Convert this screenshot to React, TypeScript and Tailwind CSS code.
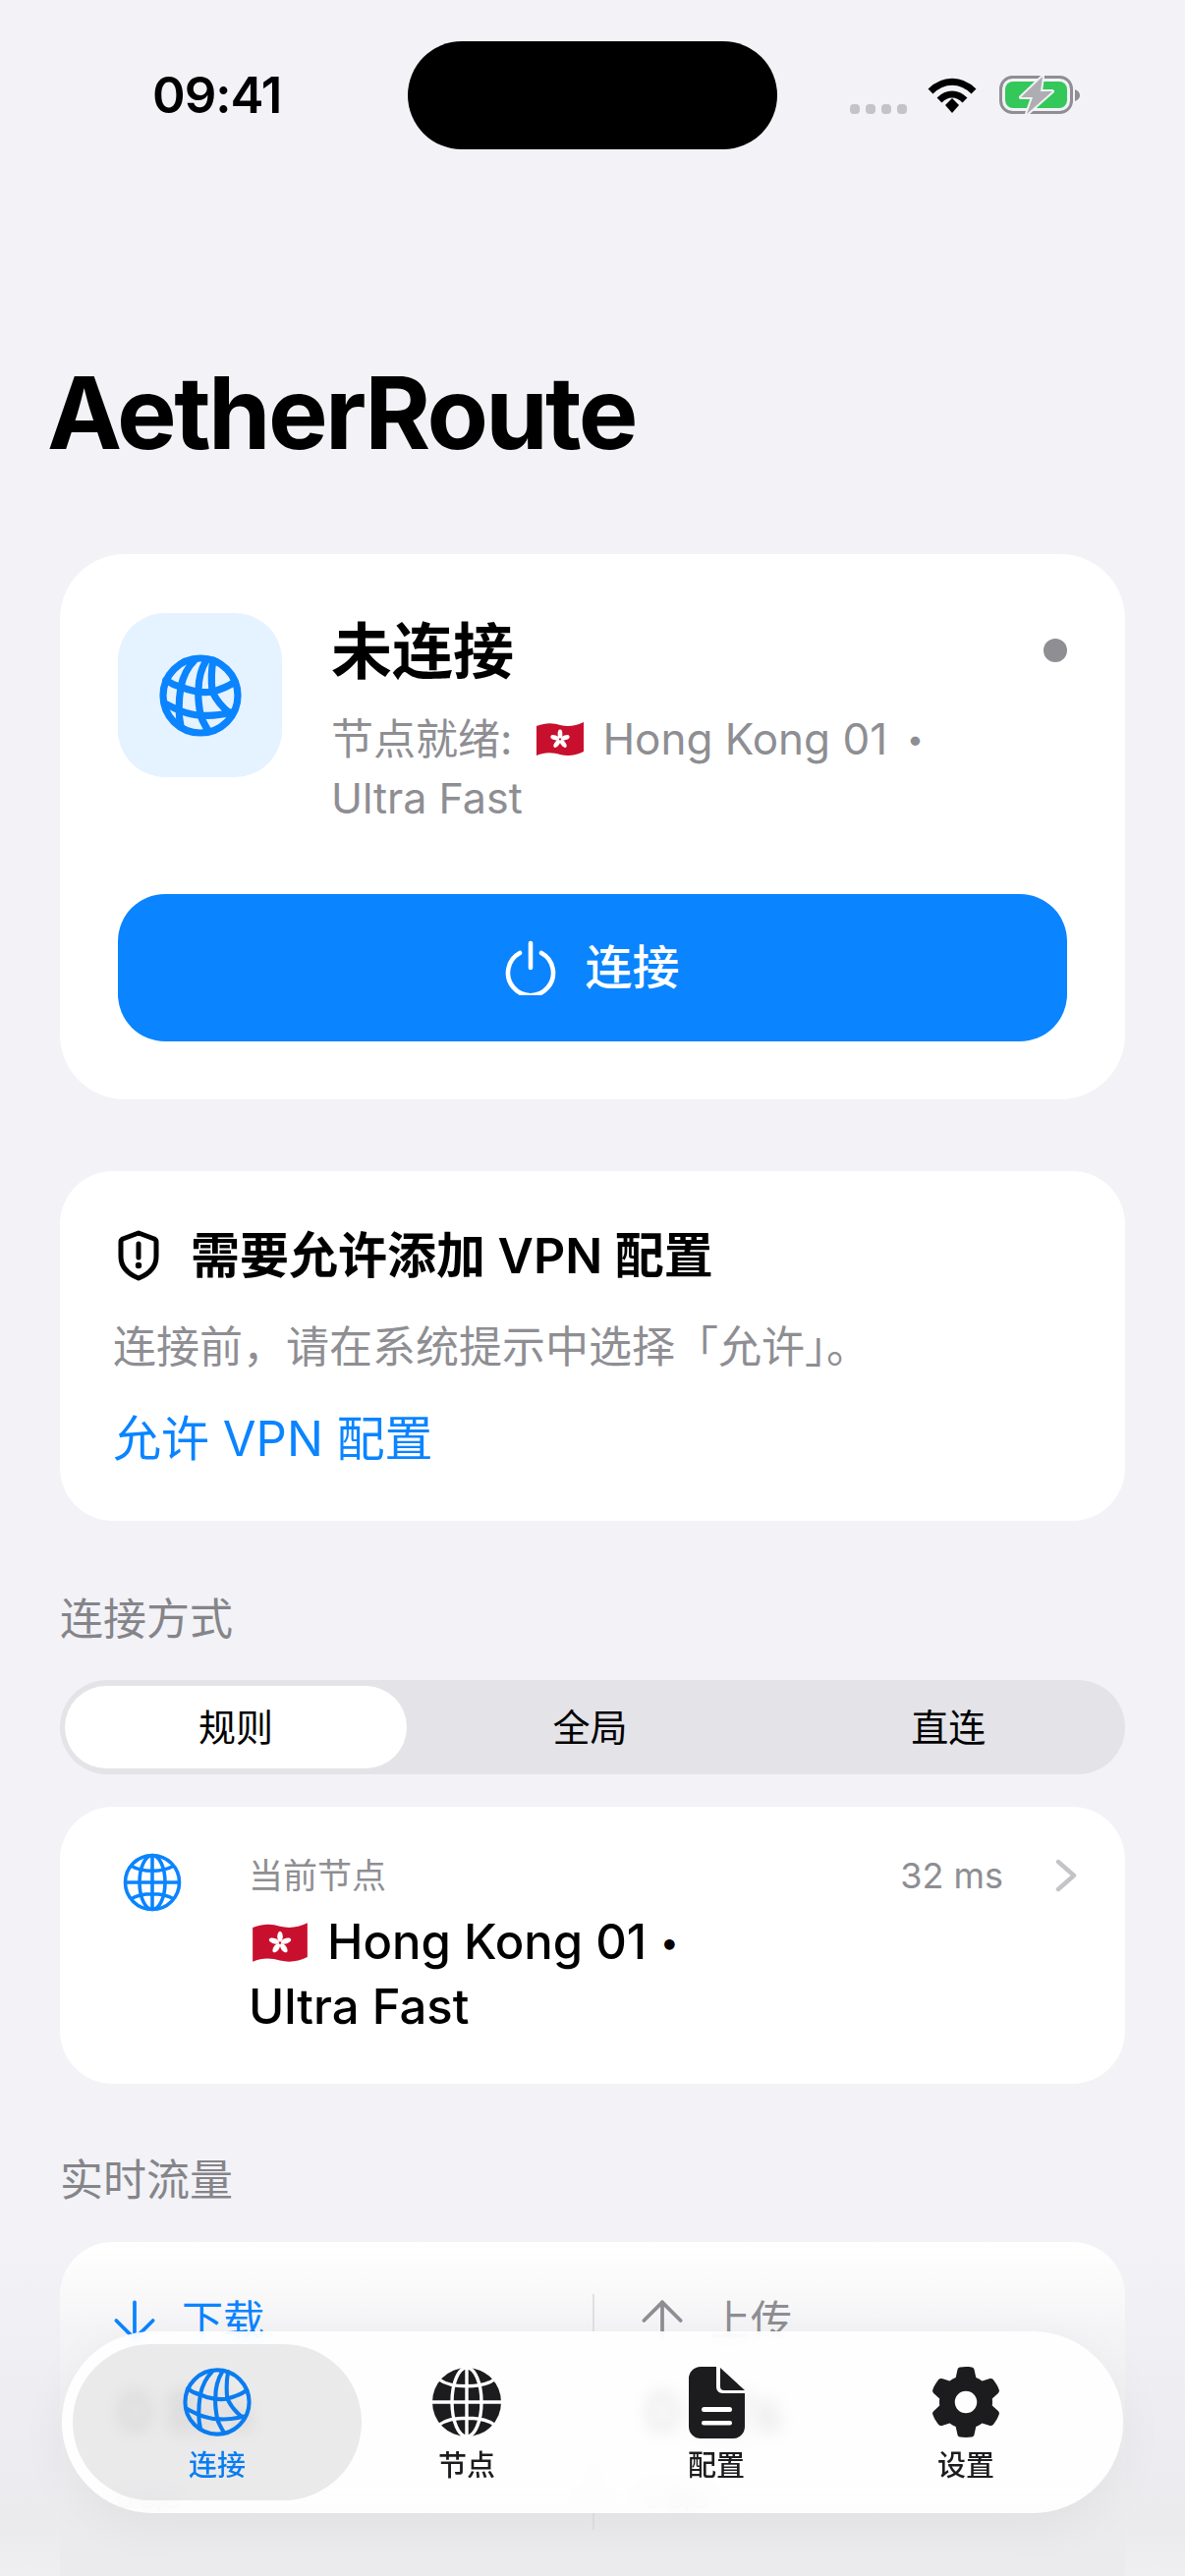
import { ArrowDown, ArrowUp } from 'lucide-react'
import { FaGear } from 'react-icons/fa6'

// Hong Kong flag, drawn because no emoji font is installed
function HkFlag({ className }: { className: string }) {
    return (
        <svg viewBox="0 0 50 36" className={className}>
            <path d="M1 5 C12 1 18 2 25 4 C33 6 41 5 49 1 V31 C41 35 33 36 25 34 C18 32 10 31 1 35 Z" fill="#c8102e" />
            <g transform="translate(25 18.5)" fill="#ffffff">
                <ellipse cx="0" cy="-5.5" rx="2.4" ry="4.6" />
                <ellipse cx="0" cy="-5.5" rx="2.4" ry="4.6" transform="rotate(72)" />
                <ellipse cx="0" cy="-5.5" rx="2.4" ry="4.6" transform="rotate(144)" />
                <ellipse cx="0" cy="-5.5" rx="2.4" ry="4.6" transform="rotate(216)" />
                <ellipse cx="0" cy="-5.5" rx="2.4" ry="4.6" transform="rotate(288)" />
            </g>
        </svg>
    )
}

// Irregular mesh globe (connect tab and status tile)
function NetworkIcon({ className, width }: { className: string; width: number }) {
    return (
        <svg viewBox="0 0 84 84" fill="none" stroke="currentColor" strokeWidth={width} strokeLinecap="round" className={className}>
            <circle cx="42" cy="42" r="38" />
            <path d="M36 6 C28 14 24 24 22 33 C20 46 19 60 22 73" />
            <path d="M7 26 C12 30 17 32 22 33 C30 37 44 40 54 38 C62 36 70 33 77 28" />
            <path d="M48 6 C42 16 40 26 40 36 C39 46 41 54 42 62 C44 68 47 73 50 78" />
            <path d="M55 6 C53 16 53 28 54 38 C58 46 64 54 72 60" />
            <path d="M6 50 C11 53 16 55 20 57 C28 60 36 62 42 62 C52 63 62 62 74 59" />
        </svg>
    )
}

// Outline globe for the current node row
function GlobeOutline({ className }: { className: string }) {
    return (
        <svg viewBox="0 0 60 60" fill="none" stroke="currentColor" strokeWidth="3.6" className={className}>
            <circle cx="30" cy="30" r="27.5" />
            <ellipse cx="30" cy="30" rx="13" ry="27.5" />
            <path d="M30 2.5 V57.5 M2.5 30 H57.5 M8 13 C20 20 40 20 52 13 M8 47 C20 40 40 40 52 47" />
        </svg>
    )
}

function GlobeFilled({ className }: { className: string }) {
    return (
        <svg viewBox="0 0 72 72" className={className}>
            <circle cx="36" cy="36" r="35" fill="#1c1c1e" />
            <g fill="none" stroke="#ffffff" strokeWidth="3.4">
                <ellipse cx="36" cy="36" rx="15" ry="35" />
                <path d="M36 0 V72 M0 36 H72 M8 13 C20 22 52 22 64 13 M8 59 C20 50 52 50 64 59" />
            </g>
        </svg>
    )
}

function DocIcon({ className }: { className: string }) {
    return (
        <svg viewBox="0 0 57 73" className={className}>
            <path d="M12 0 H28 V21 A6 6 0 0 0 34 27 H57 V61 A12 12 0 0 1 45 73 H12 A12 12 0 0 1 0 61 V12 A12 12 0 0 1 12 0 Z" fill="#1c1c1e" />
            <path d="M32 1 L57 24 H36 A4 4 0 0 1 32 20 Z" fill="#1c1c1e" />
            <rect x="13" y="41" width="31" height="5" rx="2.5" fill="#ffffff" />
            <rect x="13" y="55" width="31" height="4.5" rx="2.2" fill="#ffffff" />
        </svg>
    )
}

function ShieldIcon() {
    return (
        <svg viewBox="0 0 42 52" className="h-[52px] w-[42px] shrink-0" fill="none">
            <path d="M21 3 L37 9 Q39 10 39 12 V27 C39 38 31 45 21 49 C11 45 3 38 3 27 V12 Q3 10 5 9 Z" stroke="#000000" strokeWidth="5" strokeLinejoin="round" />
            <path d="M21 14 V28" stroke="#000000" strokeWidth="5" strokeLinecap="round" />
            <circle cx="21" cy="36" r="3.2" fill="#000000" />
        </svg>
    )
}

function StatusIcons() {
    return (
        <div className="flex items-center">
            <div className="flex gap-[6px] mt-[28px]">
                {[...Array(4)].map((_, i) => (
                    <div key={i} className="w-[10px] h-[10px] rounded-[4px] bg-[#c4c4c8]" />
                ))}
            </div>
            <svg viewBox="0 0 50 38" className="w-[50px] h-[38px] ml-[21px] mt-[2px]" fill="none" stroke="#000000" strokeWidth="7">
                <path d="M3 14 C16 1 34 1 47 14" />
                <path d="M12 23 C20 15 30 15 38 23" />
                <path d="M18 28 L25 21 L32 28 L25 36 Z" fill="#000000" stroke="none" />
            </svg>
            <svg viewBox="0 0 82 40" className="w-[82px] h-[40px] ml-[23px]">
                <rect x="1.5" y="1.5" width="72" height="36" rx="12" fill="none" stroke="#8e8e93" strokeWidth="3" />
                <rect x="6" y="6" width="63" height="27" rx="8" fill="#34c759" />
                <path d="M77 14 Q82 16 82 20 Q82 24 77 26 Z" fill="#8e8e93" />
                <path d="M44 1 L22 22 H34 L28 39 L54 16 H42 Z" fill="#aeaeb2" stroke="#f2f2f7" strokeWidth="4" strokeLinejoin="round" paintOrder="stroke" />
            </svg>
        </div>
    )
}

function TabItem({ label, active, children }: { label: string; active?: boolean; children: React.ReactNode }) {
    return (
        <div className="relative flex flex-col items-center pt-[23px]">
            {active && <div className="absolute inset-y-0 -inset-x-[20px] rounded-[80px] bg-[#1c1c28]/[0.09]" />}
            <div className="relative flex h-[72px] w-[72px] items-center justify-center">{children}</div>
            <div className={`relative mt-[9px] text-[29px] leading-[40px] font-medium ${active ? 'text-[#0a7cf0]' : 'text-[#1c1c1e]'}`}>
                {label}
            </div>
        </div>
    )
}

function TrafficColumn({ label, blue, icon }: { label: string; blue?: boolean; icon: React.ReactNode }) {
    return (
        <div>
            <div className={`flex items-center gap-[16px] text-[42px] leading-[64px] ${blue ? 'text-[#0a84ff]' : 'text-[#8e8e93]'}`}>
                {icon}
                <span>{label}</span>
            </div>
            <div className="mt-[29px] pl-[14px] text-[56px] leading-[64px] font-semibold text-black">0 B/s</div>
            <div className="mt-[44px] pl-[14px] text-[26px] leading-[26px] text-[#8e8e93]">0 B/s</div>
        </div>
    )
}

export default function App() {
    return (
        <div className="relative w-[1206px] h-[2622px] overflow-hidden bg-[linear-gradient(#f2f2f7_2280px,#ebebee_2570px,#efeff2_2622px)] font-['Inter','Noto_Sans_CJK_SC',sans-serif] text-black">
            {/* Status bar */}
            <div className="flex items-center h-[110px] mt-[42px] pl-[155px]">
                <div className="w-[260px] text-[51px] leading-[60px] font-semibold tracking-[-1px]">09:41</div>
                <div className="w-[376px] h-[110px] rounded-[55px] bg-black" />
                <div className="ml-[74px]">
                    <StatusIcons />
                </div>
            </div>

            <h1 className="mt-[208px] pl-[48px] text-[102px] leading-[120px] font-bold tracking-[-2.7px]">AetherRoute</h1>

            <div className="mx-[61px] w-[1084px]">
                {/* Connection card */}
                <section className="mt-[84px] h-[555px] rounded-[66px] bg-white px-[59px] pt-[60px]">
                    <div className="flex">
                        <div className="flex h-[167px] w-[167px] shrink-0 items-center justify-center rounded-[48px] bg-[#e5f2ff] text-[#0a84ff]">
                            <NetworkIcon className="h-[84px] w-[84px]" width={7.2} />
                        </div>
                        <div className="ml-[50px] flex-1">
                            <div className="text-[62px] leading-[80px] font-semibold">未连接</div>
                            <div className="mt-[18px] text-[43px] leading-[60px] text-[#8e8e93]">
                                <div className="flex items-center">
                                    <span>节点就绪:</span>
                                    <HkFlag className="ml-[24px] mr-[18px] h-[36px] w-[50px]" />
                                    <span className="text-[44px]">Hong Kong 01</span>
                                    <span className="ml-[20px] text-[30px]">•</span>
                                </div>
                                <div>Ultra Fast</div>
                            </div>
                        </div>
                        <div className="mt-[26px] h-[24px] w-[24px] rounded-full bg-[#8e8e93]" />
                    </div>
                    <button className="mt-[68px] flex h-[150px] w-[966px] items-center justify-center rounded-[48px] bg-[#0a84ff] text-white">
                        <svg viewBox="0 0 52 56" fill="none" stroke="#ffffff" strokeWidth="4.6" strokeLinecap="round" className="h-[56px] w-[52px]">
                            <path d="M15 13 A23 23 0 1 0 37 13" />
                            <path d="M26 3 V28" />
                        </svg>
                        <span className="ml-[29px] text-[48px] leading-[60px] font-medium">连接</span>
                    </button>
                </section>

                {/* VPN permission card */}
                <section className="mt-[73px] h-[356px] rounded-[54px] bg-white px-[54px] pt-[56px]">
                    <div className="flex items-center pl-[5px]">
                        <ShieldIcon />
                        <h2 className="ml-[32px] text-[50px] leading-[60px] font-semibold">需要允许添加 VPN 配置</h2>
                    </div>
                    <p className="mt-[33px] text-[44px] leading-[60px] text-[#8e8e93]">连接前，请在系统提示中选择「允许」。</p>
                    <div className="mt-[31px] text-[49px] leading-[66px] text-[#0a84ff]">允许 VPN 配置</div>
                </section>

                <div className="mt-[70px] text-[44px] leading-[60px] text-[#858589]">连接方式</div>

                {/* Mode switch */}
                <div className="mt-[32px] grid h-[96px] grid-cols-3 rounded-[48px] bg-[#e3e3e8] py-[6px] pl-[5px] pr-[6px] text-[38px] leading-[84px] text-center">
                    <div className="w-[348px] rounded-[42px] bg-white">规则</div>
                    <div className="pr-[4px]">全局</div>
                    <div className="pl-[10px]">直连</div>
                </div>

                {/* Current node */}
                <section className="mt-[33px] flex h-[282px] rounded-[54px] bg-white pt-[45px]">
                    <GlobeOutline className="ml-[64px] mt-[2px] h-[60px] w-[60px] shrink-0 text-[#0a84ff]" />
                    <div className="ml-[68px] flex-1">
                        <div className="flex items-center text-[35px] leading-[50px] text-[#8e8e93]">
                            <span className="flex-1">当前节点</span>
                            <span className="text-[36px]">32 ms</span>
                            <svg viewBox="0 0 24 34" fill="none" stroke="#c4c4c8" strokeWidth="4.4" strokeLinecap="round" strokeLinejoin="round" className="ml-[52px] mr-[48px] h-[34px] w-[24px]">
                                <path d="M4 3 L20 17 L4 31" />
                            </svg>
                        </div>
                        <div className="mt-[10px] text-[49px] leading-[66px] font-medium">
                            <div className="flex items-center">
                                <HkFlag className="ml-[3px] mr-[19px] h-[42px] w-[58px]" />
                                <span>Hong Kong 01</span>
                                <span className="ml-[14px] text-[34px]">•</span>
                            </div>
                            <div>Ultra Fast</div>
                        </div>
                    </div>
                </section>

                <div className="mt-[68px] text-[44px] leading-[60px] text-[#858589]">实时流量</div>

                {/* Traffic, mostly hidden by the tab bar */}
                <section className="relative mt-[33px] grid h-[420px] grid-cols-[537px_1fr] rounded-[54px] bg-[linear-gradient(#ffffff,#f4f4f6_22%,#ebebee_68%)] pl-[44px] pt-[48px]">
                    <TrafficColumn label="下载" blue icon={<ArrowDown size={64} strokeWidth={1.4} />} />
                    <div className="absolute left-[542px] top-[53px] bottom-[127px] w-[2px] bg-[#e0e0e4]" />
                    <TrafficColumn label="上传" icon={<ArrowUp size={64} strokeWidth={1.4} />} />
                </section>
            </div>

            {/* Tab bar */}
            <nav className="absolute left-[63px] top-[2373px] grid h-[185px] w-[1080px] grid-cols-[repeat(4,254px)] rounded-[93px] bg-white/90 px-[31px] py-[13px] shadow-[0_12px_50px_rgba(0,0,0,0.05)] backdrop-blur-sm">
                <TabItem label="连接" active>
                    <NetworkIcon className="h-[72px] w-[72px] text-[#0a7cf0]" width={4.8} />
                </TabItem>
                <TabItem label="节点">
                    <GlobeFilled className="h-[72px] w-[72px]" />
                </TabItem>
                <TabItem label="配置">
                    <DocIcon className="h-[73px] w-[57px]" />
                </TabItem>
                <TabItem label="设置">
                    <FaGear className="h-[72px] w-[72px] text-[#1c1c1e]" />
                </TabItem>
            </nav>
        </div>
    )
}
